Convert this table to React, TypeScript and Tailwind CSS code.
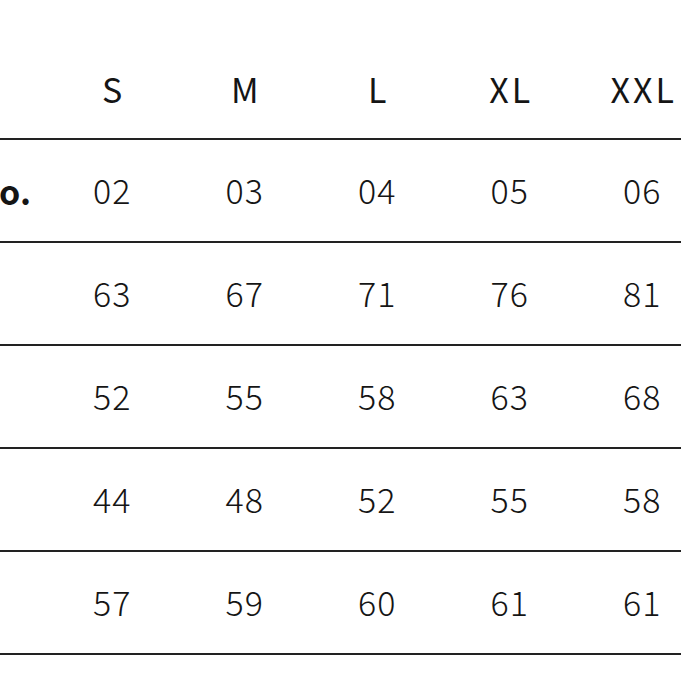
import React from 'react';

const sizes = ['S', 'M', 'L', 'XL', 'XXL'];

const rows: { label: string; values: string[] }[] = [
  { label: 'No.', values: ['02', '03', '04', '05', '06'] },
  { label: '', values: ['63', '67', '71', '76', '81'] },
  { label: '', values: ['52', '55', '58', '63', '68'] },
  { label: '', values: ['44', '48', '52', '55', '58'] },
  { label: '', values: ['57', '59', '60', '61', '61'] },
];

const font = { fontFamily: '"Noto Sans CJK SC", "Noto Sans", sans-serif' };

export default function App() {
  return (
    <div className="w-[681px] h-[681px] bg-white overflow-hidden text-[#151515]" style={font}>
      <div className="pt-[40px]">
        <div className="grid grid-cols-[140px_repeat(5,132.5px)] -ml-[94px] h-[100px] items-center border-b-[2.5px] border-[#222] w-[775px]">
          <div />
          {sizes.map((s) => (
            <div key={s} className="text-center text-[34px] font-normal leading-none tracking-[3px] indent-[3px]">
              {s}
            </div>
          ))}
        </div>
        {rows.map((r, i) => (
          <div
            key={i}
            className="grid grid-cols-[140px_repeat(5,132.5px)] -ml-[94px] h-[103px] items-center border-b-[2.5px] border-[#222] w-[775px]"
          >
            <div className="text-right pr-[15px] text-[34px] font-bold leading-none">{r.label}</div>
            {r.values.map((v, j) => (
              <div key={j} className="text-center text-[34px] font-light leading-none tracking-[1px] -mt-[2px]">
                {v}
              </div>
            ))}
          </div>
        ))}
      </div>
    </div>
  );
}
